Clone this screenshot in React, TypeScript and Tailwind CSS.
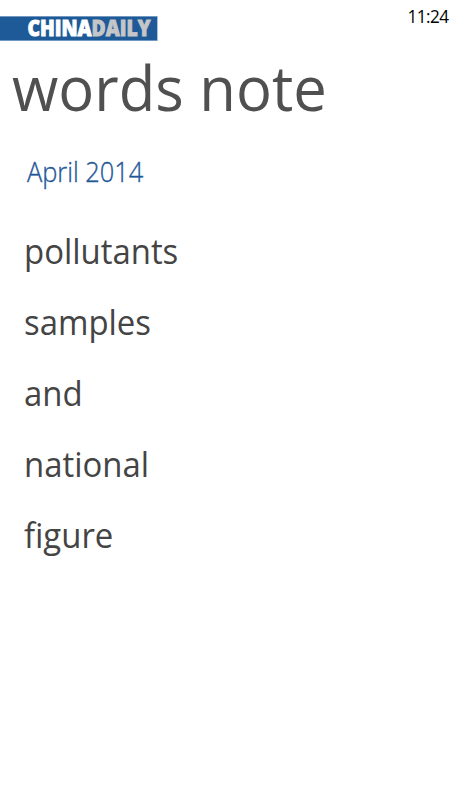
const words = ["pollutants", "samples", "and", "national", "figure"];

function Logo() {
  return (
    <svg
      width="160"
      height="37"
      viewBox="0 -6 160 37"
      className="block overflow-visible"
      fontFamily="'Open Sans', sans-serif"
      fontWeight="800"
      fontSize="22.5"
      strokeWidth="0.9"
    >
      <rect width="158" height="25" fill="#a9c1da" />
      <rect y="0.6" width="157" height="23.8" fill="#1f5a98" />
      <text
        x="27.5"
        y="20"
        textLength="123"
        lengthAdjust="spacingAndGlyphs"
      >
        <tspan fill="#ffffff" stroke="#ffffff">
          CHINA
        </tspan>
        <tspan fill="#c4c6c8" stroke="#c4c6c8">
          DAILY
        </tspan>
      </text>
    </svg>
  );
}

export default function App() {
  return (
    <div className="h-[787px] w-[472px] overflow-hidden bg-white font-['Open_Sans',sans-serif] text-[#444444]">
      {/* Status row */}
      <header className="flex h-10 items-start justify-between">
        <div className="pt-2.5">
          <Logo />
        </div>
        <time className="mr-6 origin-right scale-x-[0.9] pt-1 text-[19px] leading-6 tracking-[-0.6px] text-black">
          11:24
        </time>
      </header>

      <h1 className="ml-3 origin-left scale-x-[0.964] text-[62px] leading-[94px] whitespace-nowrap text-[#505050]">
        words note
      </h1>

      <h2 className="ml-[27px] origin-left scale-x-[0.94] pt-[18px] text-[27px] leading-10 font-light text-[#1f5799] [-webkit-text-stroke:0.35px_#1f5799]">
        April 2014
      </h2>

      <ul className="ml-6 origin-left scale-x-[0.94] pt-[23px]">
        {words.map((word) => (
          <li key={word} className="h-[71px] text-[35px] leading-[71px]">
            {word}
          </li>
        ))}
      </ul>
    </div>
  );
}
